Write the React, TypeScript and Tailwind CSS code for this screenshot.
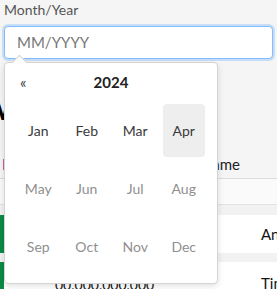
import React from 'react';

const months = ['Jan', 'Feb', 'Mar', 'Apr', 'May', 'Jun', 'Jul', 'Aug', 'Sep', 'Oct', 'Nov', 'Dec'];
const enabled = 4;
const selected = 3;

function MonthPicker() {
  return (
    <div className="absolute left-[4px] top-[62px] w-[214px] h-[222px] bg-white border border-[#d4d4d4] rounded-[4px] shadow-[0_2px_6px_rgba(0,0,0,0.12)] px-[12px] pt-[9px]">
      <div className="absolute left-[9px] top-[-6px] w-[11px] h-[11px] rotate-45 bg-white border-l border-t border-[#d4d4d4]" />
      <div className="relative flex items-center h-[20px]">
        <button className="w-[20px] text-[15px] leading-none text-[#333] text-left pl-[3px]">«</button>
        <div className="flex-1 text-center font-bold text-[15px] text-[#222] pr-[20px]">2024</div>
      </div>
      <div className="grid grid-cols-4 gap-x-[6px] gap-y-[5px] mt-[12px]">
        {months.map((m, i) => (
          <div
            key={m}
            className={`h-[53px] flex items-center justify-center rounded-[4px] text-[14px] ${
              i === selected ? 'bg-[#eeeeee]' : ''
            } ${i < enabled ? 'text-[#3a3a3a]' : 'text-[#8f8f8f]'}`}
          >
            {m}
          </div>
        ))}
      </div>
    </div>
  );
}

export default function App() {
  return (
    <div className="relative w-[277px] h-[289px] overflow-hidden bg-[#f5f5f5] font-['Lato','Liberation_Sans',sans-serif]">
      <div className="px-[4px] pt-[1px]">
        <label className="block text-[14px] leading-[18px] text-[#555]">Month/Year</label>
        <div className="mt-[7px] h-[33px] bg-white border border-[#80bdff] rounded-[4px] shadow-[0_0_0_2px_rgba(0,123,255,0.18)] flex items-center px-[12px]">
          <span className="text-[15px] text-[#777]">MM/YYYY</span>
        </div>
      </div>

      {/* page content under the picker */}
      <div className="mt-[36px] ml-[-18px] text-[28px] font-bold text-black leading-[28px] whitespace-nowrap">Watchlist</div>

      <div className="mt-[28px] h-[28px] flex items-center border-b border-[#dcdcdc] whitespace-nowrap">
        <span className="ml-[2px] w-[199px] shrink-0 text-[15px] text-[#6a1b9a]">IP</span>
        <span className="shrink-0 text-[15px] text-[#222]">Name</span>
      </div>
      <div className="h-[26px] bg-[#fafafa] border-b border-[#e2e2e2]" />
      <div className="h-[10px] bg-[#f2f2f2]" />
      <div className="h-[38px] bg-white flex items-center whitespace-nowrap">
        <div className="w-[4px] h-full shrink-0 bg-[#0a8a45]" />
        <span className="w-[257px] shrink-0" />
        <span className="shrink-0 text-[15px] text-[#111]">Andrew</span>
      </div>
      <div className="h-[9px] bg-[#f2f2f2]" />
      <div className="h-[40px] bg-white flex items-start whitespace-nowrap">
        <div className="w-[4px] h-full shrink-0 bg-[#0a8a45]" />
        <span className="w-[257px] shrink-0 pl-[51px] pt-[12px] text-[14px] text-[#111]">00.000.000.000</span>
        <span className="shrink-0 pt-[10px] text-[15px] text-[#111]">Timothy</span>
      </div>

      <MonthPicker />
    </div>
  );
}
